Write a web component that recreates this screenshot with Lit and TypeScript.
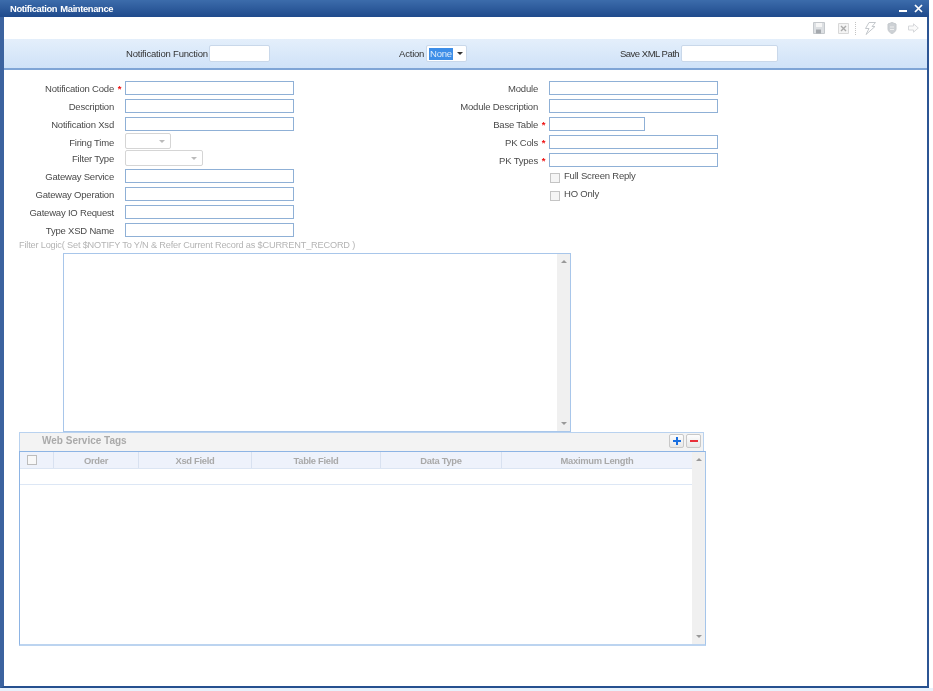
import { LitElement, html, css } from 'lit';
import { customElement } from 'lit/decorators.js';

const LEFT_FIELDS = [
  { label: 'Notification Code', req: true, kind: 'input' },
  { label: 'Description', kind: 'input' },
  { label: 'Notification Xsd', kind: 'input' },
  { label: 'Firing Time', kind: 'sel-s' },
  { label: 'Filter Type', kind: 'sel-l' },
  { label: 'Gateway Service', kind: 'input' },
  { label: 'Gateway Operation', kind: 'input' },
  { label: 'Gateway IO Request', kind: 'input' },
  { label: 'Type XSD Name', kind: 'input' },
];

const RIGHT_FIELDS = [
  { label: 'Module', kind: 'input' },
  { label: 'Module Description', kind: 'input' },
  { label: 'Base Table', req: true, kind: 'input-m' },
  { label: 'PK Cols', req: true, kind: 'input' },
  { label: 'PK Types', req: true, kind: 'input' },
];

const COLUMNS = [
  { name: 'Order', w: 85 },
  { name: 'Xsd Field', w: 113 },
  { name: 'Table Field', w: 129 },
  { name: 'Data Type', w: 121 },
  { name: 'Maximum Length', w: 191 },
];

@customElement('app-root')
export class AppRoot extends LitElement {
  static styles = css`
    :host {
      display: block;
      width: 933px;
      height: 691px;
      overflow: hidden;
      background: linear-gradient(#fff 0 688px, #e8f1fb 688px);
      font-family: 'Liberation Sans', Arial, sans-serif;
      font-size: 9.5px;
      letter-spacing: -0.2px;
      color: #4a4a4a;
    }
    .window {
      box-sizing: border-box;
      width: 929px;
      height: 688px;
      background: #fff;
      border-left: 4px solid #3c639f;
      border-right: 2px solid #2c5594;
      border-bottom: 2px solid #26508f;
      display: flex;
      flex-direction: column;
      filter: blur(0.3px);
    }
    .title {
      height: 17px;
      margin: 0 -2px 0 -4px;
      padding: 0 6px 0 10px;
      display: flex;
      align-items: center;
      justify-content: space-between;
      background: linear-gradient(#3c6cab, #1f4a8c);
      color: #fff;
      font-weight: bold;
      font-size: 9.4px;
      letter-spacing: -0.37px;
      word-spacing: 1px;
    }
    .title svg { display: block; }
    .win-btns { display: flex; gap: 7px; align-items: center; }
    .toolbar {
      height: 22px;
      display: flex;
      align-items: center;
      justify-content: flex-end;
      padding-right: 8px;
      box-sizing: border-box;
    }
    .toolbar svg { display: block; }
    .toolbar .sep { width: 0; height: 13px; border-left: 1px dotted #c4c4c4; }
    .band {
      height: 31px;
      box-sizing: border-box;
      background: linear-gradient(#e4effb, #cfe2f8);
      border-bottom: 2px solid #7fa5d6;
      display: flex;
      align-items: center;
      color: #333;
    }
    .band .group {
      display: flex;
      align-items: center;
      justify-content: space-between;
      flex: none;
      white-space: nowrap;
    }
    .band .g1 { margin-left: 122px; width: 144px; }
    .band .g2 { margin-left: 129px; width: 68px; }
    .band .g3 { margin-left: 153px; width: 158px; }
    .band .g3 > span { letter-spacing: -0.5px; }
    .band .box {
      box-sizing: border-box;
      height: 17px;
      background: #fff;
      border: 1px solid #c9d8ea;
      border-radius: 2px;
      flex: none;
    }
    .action {
      width: 41px;
      display: flex;
      align-items: center;
      padding-left: 2px;
      gap: 4px;
    }
    .action span {
      background: #3d8ee8;
      color: #dcebfb;
      padding: 0 1px;
      line-height: 12px;
      width: 24px;
      box-sizing: border-box;
    }
    .arrow {
      width: 0;
      height: 0;
      border-left: 3.5px solid transparent;
      border-right: 3.5px solid transparent;
      border-top: 3.5px solid #333;
    }
    .form {
      display: flex;
      padding-top: 11px;
      height: 170px;
      box-sizing: border-box;
    }
    .col-l { width: 424px; }
    .field {
      height: 18px;
      display: flex;
      align-items: flex-start;
    }
    .field.short { height: 16px; }
    .field label {
      width: 110px;
      line-height: 16px;
      text-align: right;
      white-space: nowrap;
    }
    .star {
      width: 11px;
      line-height: 16px;
      color: #e11;
      font-weight: bold;
      text-align: center;
      flex: none;
    }
    input[type='text'] {
      box-sizing: border-box;
      height: 14px;
      width: 169px;
      margin: 0;
      padding: 0;
      background: #fff;
      border: 1px solid #8fb0d6;
      outline: none;
    }
    input.mid { width: 96px; }
    .sel {
      box-sizing: border-box;
      height: 16px;
      border: 1px solid #d5d5d5;
      border-radius: 2px;
      display: flex;
      align-items: center;
      justify-content: flex-end;
      padding-right: 5px;
    }
    .sel.s { width: 46px; margin-top: -2px; }
    .sel.l { width: 78px; margin-top: -1px; }
    .sel .arrow { border-top-color: #bbb; border-left-width: 3px; border-right-width: 3px; border-top-width: 3px; }
    .check {
      height: 18px;
      display: flex;
      padding-left: 121px;
      gap: 4px;
      align-items: flex-start;
    }
    .check i {
      display: block;
      box-sizing: border-box;
      width: 10px;
      height: 10px;
      margin: 2px 0 0 1px;
      border: 1px solid #c4c4c4;
      background: #f5f5f5;
    }
    .check span { line-height: 9px; }
    .hint {
      height: 13px;
      margin-left: 15px;
      line-height: 11px;
      color: #b4b4b4;
      font-size: 9.2px;
      letter-spacing: -0.18px;
      white-space: nowrap;
    }
    .logic {
      box-sizing: border-box;
      width: 508px;
      height: 179px;
      margin-left: 59px;
      border: 1px solid #a8c6ea;
      display: flex;
      justify-content: flex-end;
    }
    .scroll {
      width: 13px;
      background: #f0f0f0;
      display: flex;
      flex-direction: column;
      justify-content: space-between;
      align-items: center;
      padding: 6px 0;
      box-sizing: border-box;
      flex: none;
    }
    .up, .down {
      width: 0;
      height: 0;
      border-left: 3px solid transparent;
      border-right: 3px solid transparent;
    }
    .up { border-bottom: 3px solid #999; }
    .down { border-top: 3px solid #999; }
    .panel {
      margin: 0 0 0 15px;
      width: 687px;
      height: 214px;
      display: flex;
      flex-direction: column;
    }
    .panel-head {
      box-sizing: border-box;
      width: 685px;
      height: 19px;
      background: #f3f3f3;
      border: 1px solid #b9d2ef;
      border-bottom: none;
      display: flex;
      align-items: center;
      justify-content: space-between;
      padding: 0 2px 3px 22px;
      color: #aaa;
      font-weight: bold;
      font-size: 10px;
      letter-spacing: 0;
    }
    .btns { display: flex; gap: 2px; }
    .btn {
      box-sizing: border-box;
      width: 15px;
      height: 14px;
      border: 1px solid #c8c8c8;
      border-radius: 2px;
      background: linear-gradient(#fdfdfd, #e8e8e8);
      display: flex;
      align-items: center;
      justify-content: center;
    }
    .btn svg { display: block; }
    .grid {
      flex: 1;
      box-sizing: border-box;
      border: 1px solid #8db4e4;
      border-bottom: 2px solid #bcd4f0;
      border-right: 1px solid #a5c5ea;
      display: flex;
      min-height: 0;
    }
    .grid-main { flex: 1; min-width: 0; }
    .thead {
      height: 17px;
      background: #eef2fb;
      display: flex;
      border-bottom: 1px solid #dbe5f3;
      box-sizing: border-box;
      color: #a9a9a9;
      font-weight: bold;
      font-size: 9.4px;
      letter-spacing: -0.3px;
    }
    .th {
      box-sizing: border-box;
      display: flex;
      align-items: center;
      justify-content: center;
      border-right: 1px solid #d8e1f0;
      flex: none;
    }
    .th i {
      display: block;
      box-sizing: border-box;
      width: 10px;
      height: 10px;
      border: 1px solid #bdbdbd;
      background: #f8f8f8;
      margin-right: 9px;
    }
    .trow {
      height: 15px;
      border-bottom: 1px solid #dde7f5;
      box-sizing: content-box;
    }
  `;

  private field(f: { label: string; req?: boolean; kind: string }) {
    let ctl = html`<input type="text" />`;
    if (f.kind === 'input-m') ctl = html`<input type="text" class="mid" />`;
    if (f.kind === 'sel-s') ctl = html`<div class="sel s"><b class="arrow"></b></div>`;
    if (f.kind === 'sel-l') ctl = html`<div class="sel l"><b class="arrow"></b></div>`;
    return html`
      <div class="field ${f.kind === 'sel-s' ? 'short' : ''}">
        <label>${f.label}</label>
        <span class="star">${f.req ? '*' : ''}</span>
        ${ctl}
      </div>
    `;
  }

  private toolbarIcons() {
    const c = '#c4c8cc';
    return html`
      <svg width="12" height="12" viewBox="0 0 12 12" style="margin-right:13px">
        <path d="M.5.5h11v11H.5z" fill="#dcdfe2" stroke=${c} />
        <rect x="3" y="1" width="6" height="4" fill="#f6f6f6" />
        <rect x="3" y="7.5" width="5" height="4" fill="#a5a9ae" />
      </svg>
      <svg width="11" height="11" viewBox="0 0 11 11" style="margin-right:6px">
        <path d="M.5.5h10v10H.5z" fill="#f4f4f4" stroke="#d8d8d8" />
        <path d="M3 3l5 5M8 3l-5 5" stroke="#aaa" stroke-width="1.4" />
      </svg>
      <div class="sep" style="margin-right:8px"></div>
      <svg width="12" height="13" viewBox="0 0 12 13" style="margin-right:11px">
        <path d="M5 .5h6.5L8 4.5h3L2 12.5l3-6H1.5z" fill="#fff" stroke=${c} />
      </svg>
      <svg width="10" height="12" viewBox="0 0 10 12" style="margin-right:11px">
        <path d="M1 2l4-1.5L9 2v5c0 2-2 4-4 4.5C3 11 1 9 1 7z" fill="#cdd1d5" stroke=${c} />
        <path d="M3 5h4M3 7.5h4" stroke="#eee" />
      </svg>
      <svg width="11" height="10" viewBox="0 0 11 10">
        <path d="M.5 3h5V.8L10.3 5 5.5 9.2V7h-5z" fill="#fafafa" stroke="#d6d8db" />
      </svg>
    `;
  }

  render() {
    return html`
      <div class="window">
        <div class="title">
          <span>Notification Maintenance</span>
          <div class="win-btns">
            <svg width="8" height="9" viewBox="0 0 8 9"><rect y="6" width="8" height="2" fill="#fff" /></svg>
            <svg width="9" height="9" viewBox="0 0 9 9"><path d="M1 1l7 7M8 1l-7 7" stroke="#fff" stroke-width="1.7" /></svg>
          </div>
        </div>
        <div class="toolbar">${this.toolbarIcons()}</div>
        <div class="band">
          <div class="group g1"><span>Notification Function</span><div class="box" style="width:61px"></div></div>
          <div class="group g2"><span>Action</span><div class="box action"><span>None</span><b class="arrow"></b></div></div>
          <div class="group g3"><span>Save XML Path</span><div class="box" style="width:97px"></div></div>
        </div>
        <div class="form">
          <div class="col-l">${LEFT_FIELDS.map((f) => this.field(f))}</div>
          <div class="col-r">
            ${RIGHT_FIELDS.map((f) => this.field(f))}
            <div class="check"><i></i><span>Full Screen Reply</span></div>
            <div class="check"><i></i><span>HO Only</span></div>
          </div>
        </div>
        <div class="hint">Filter Logic( Set $NOTIFY To Y/N &amp; Refer Current Record as $CURRENT_RECORD )</div>
        <div class="logic">
          <div class="scroll"><b class="up"></b><b class="down"></b></div>
        </div>
        <div class="panel">
          <div class="panel-head">
            <span>Web Service Tags</span>
            <div class="btns">
              <div class="btn">
                <svg width="10" height="10" viewBox="0 0 10 10"><path d="M5 1v8M1 5h8" stroke="#1a6fe0" stroke-width="2" /></svg>
              </div>
              <div class="btn">
                <svg width="10" height="10" viewBox="0 0 10 10"><path d="M1 5h8" stroke="#e8303a" stroke-width="2" /></svg>
              </div>
            </div>
          </div>
          <div class="grid">
            <div class="grid-main">
              <div class="thead">
                <div class="th" style="width:34px"><i></i></div>
                ${COLUMNS.map((c) => html`<div class="th" style="width:${c.w}px">${c.name}</div>`)}
              </div>
              <div class="trow"></div>
            </div>
            <div class="scroll"><b class="up"></b><b class="down"></b></div>
          </div>
        </div>
      </div>
    `;
  }
}
